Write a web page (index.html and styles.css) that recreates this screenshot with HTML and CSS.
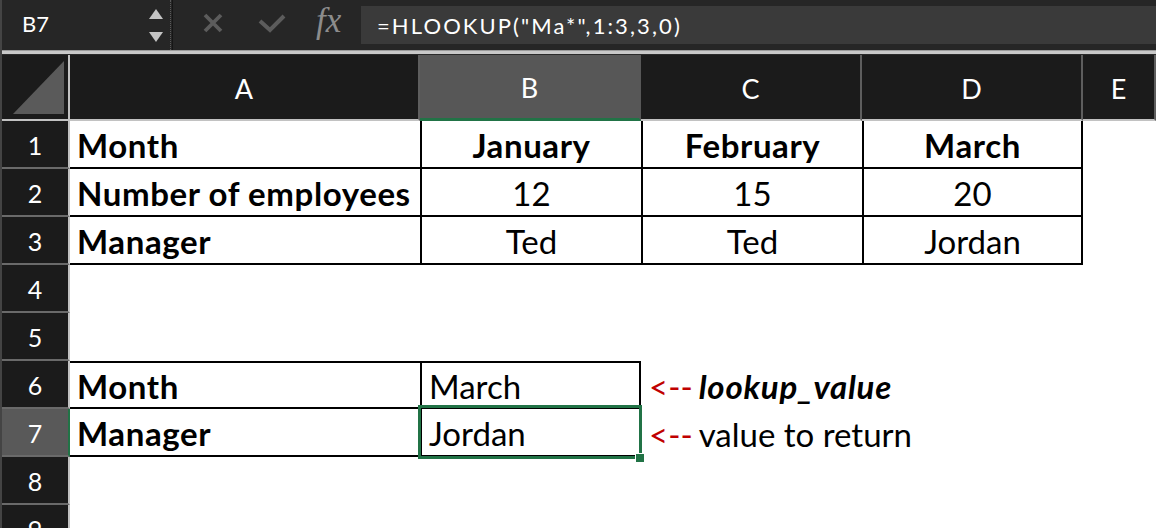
FILE: index.html
```html
<!DOCTYPE html>
<html>
<head>
<link rel="stylesheet" href="styles.css">
</head>
<body>
<div class="app">
    <div class="formula-bar">
        <div class="name-box">
            <span class="cell-ref">B7</span>
            <svg class="spinner" width="16" height="36" viewBox="0 0 16 36">
                <polygon points="1,11 15,11 8,1" fill="#c4c4c4"/>
                <polygon points="1,24 15,24 8,34" fill="#c4c4c4"/>
            </svg>
        </div>
        <div class="bar-divider"></div>
        <svg class="icon-cancel" width="20" height="20" viewBox="0 0 20 20">
            <path d="M2 2 L18 18 M18 2 L2 18" stroke="#5c5c5c" stroke-width="3.8" fill="none"/>
        </svg>
        <svg class="icon-enter" width="28" height="20" viewBox="0 0 28 20">
            <path d="M2 8 L12 17 L26 3" stroke="#5c5c5c" stroke-width="4" fill="none"/>
        </svg>
        <span class="fx">fx</span>
        <div class="formula-input">=HLOOKUP("Ma*",1:3,3,0)</div>
    </div>
    <div class="bar-rule"></div>

    <div class="sheet">
        <div class="corner">
            <svg width="52" height="54" viewBox="0 0 52 54"><polygon points="0,53 51,53 51,0" fill="#5a5a5a"/></svg>
        </div>
        <div class="col-head">A</div>
        <div class="col-head active">B</div>
        <div class="col-head">C</div>
        <div class="col-head">D</div>
        <div class="col-head">E</div>

        <div class="row-head">1</div>
        <div class="cell bold bb">Month</div>
        <div class="cell bold center bl bb">January</div>
        <div class="cell bold center bl bb">February</div>
        <div class="cell bold center bl bb br">March</div>
        <div class="cell"></div>

        <div class="row-head">2</div>
        <div class="cell bold bb">Number of employees</div>
        <div class="cell center bl bb">12</div>
        <div class="cell center bl bb">15</div>
        <div class="cell center bl bb br">20</div>
        <div class="cell"></div>

        <div class="row-head">3</div>
        <div class="cell bold bb">Manager</div>
        <div class="cell center bl bb">Ted</div>
        <div class="cell center bl bb">Ted</div>
        <div class="cell center bl bb br">Jordan</div>
        <div class="cell"></div>

        <div class="row-head">4</div>
        <div class="cell"></div><div class="cell"></div><div class="cell"></div><div class="cell"></div><div class="cell"></div>

        <div class="row-head">5</div>
        <div class="cell"></div><div class="cell"></div><div class="cell"></div><div class="cell"></div><div class="cell"></div>

        <div class="row-head">6</div>
        <div class="cell bold bt bb">Month</div>
        <div class="cell bl bt bb br">March</div>
        <div class="cell note"><span class="arrow">&lt;--</span> <b class="term">lookup_value</b></div>
        <div class="cell"></div><div class="cell"></div>

        <div class="row-head selected">7</div>
        <div class="cell bold bb">Manager</div>
        <div class="cell bl bb br current">Jordan
            <div class="selection"><span class="fill-handle"></span></div>
        </div>
        <div class="cell note"><span class="arrow">&lt;--</span> value to return</div>
        <div class="cell"></div><div class="cell"></div>

        <div class="row-head">8</div>
        <div class="cell"></div><div class="cell"></div><div class="cell"></div><div class="cell"></div><div class="cell"></div>

        <div class="row-head">9</div>
        <div class="cell"></div><div class="cell"></div><div class="cell"></div><div class="cell"></div><div class="cell"></div>
    </div>
</div>
</body>
</html>
```

FILE: styles.css
```css
* {
    margin: 0;
    padding: 0;
    box-sizing: border-box;
}

body {
    background: #ffffff;
    font-family: "Lato", "Open Sans", sans-serif;
}

.app {
    width: 1156px;
    height: 528px;
    overflow: hidden;
    border-left: 2px solid #444444;
}

/* formula bar */
.formula-bar {
    height: 50px;
    background: #262626;
    display: flex;
    align-items: center;
}

.name-box {
    width: 168px;
    height: 50px;
    display: flex;
    align-items: center;
    justify-content: space-between;
    padding: 0 6px 0 20px;
}

.cell-ref {
    color: #ffffff;
    font-size: 22px;
    margin-top: -4px;
}

.spinner {
    margin-top: 1px;
}

.bar-divider {
    width: 3px;
    height: 50px;
    border-left: 1px dotted #5a5a5a;
    border-right: 1px solid #161616;
}

.icon-cancel {
    margin-left: 30px;
    margin-top: -4px;
}

.icon-enter {
    margin-left: 35px;
    margin-top: -4px;
}

.fx {
    font-family: "Liberation Serif", serif;
    font-style: italic;
    font-size: 35px;
    color: #8c8c8c;
    margin-left: 30px;
    margin-top: -8px;
    width: 32px;
}

.formula-input {
    flex: 1;
    height: 38px;
    margin-left: 13px;
    margin-top: 0;
    background: #3a3a3a;
    color: #ffffff;
    font-size: 22px;
    letter-spacing: 2.1px;
    padding-left: 16px;
    display: flex;
    align-items: center;
}

.bar-rule {
    height: 5px;
    background: #c8c8c8;
    border-top: 1px solid #9a9a9a;
    border-bottom: 1px solid #2a2a2a;
}

/* grid */
.sheet {
    display: grid;
    grid-template-columns: 68px 350px 221px 221px 221px 1fr;
    grid-template-rows: 66px repeat(9, 48px);
}

.corner {
    background: #1b1b1b;
    border-right: 2px solid #c2c2c2;
    border-bottom: 2px solid #c2c2c2;
    display: flex;
    align-items: flex-end;
    padding: 0 0 4px 11px;
}

.col-head {
    background: #1b1b1b;
    color: #ffffff;
    font-size: 27px;
    display: flex;
    align-items: center;
    justify-content: center;
    border-bottom: 2px solid #c2c2c2;
    border-right: 2px solid #5e5e5e;
    padding-top: 2px;
}

.col-head.active {
    background: #575757;
    border-bottom: 3px solid #217346;
    border-right-color: #575757;
}

.row-head {
    background: #1b1b1b;
    color: #ffffff;
    font-size: 25px;
    display: flex;
    align-items: center;
    justify-content: center;
    border-right: 2px solid #c2c2c2;
    border-bottom: 2px solid #6a6a6a;
    padding-top: 2px;
}

.row-head.selected {
    background: #595959;
    border-right-color: #217346;
}

.cell {
    position: relative;
    display: flex;
    align-items: center;
    padding: 2px 7px 0 7px;
    font-size: 33px;
    color: #000000;
    white-space: nowrap;
}

.bold {
    font-weight: bold;
    letter-spacing: 0.6px;
}

.center {
    justify-content: center;
}

.bl { border-left: 2px solid #000; }
.br { border-right: 2px solid #000; }
.bt { border-top: 2px solid #000; }
.bb { border-bottom: 2px solid #000; }

.note {
    padding-left: 8px;
    overflow: visible;
}

.term {
    font-style: italic;
    letter-spacing: 0.8px;
}

.arrow {
    color: #c00000;
    margin-right: 6px;
}

.selection {
    position: absolute;
    left: -4px;
    top: -4px;
    right: -3px;
    bottom: -4px;
    border: 3px solid #217346;
}

.fill-handle {
    position: absolute;
    right: -6px;
    bottom: -7px;
    width: 10px;
    height: 10px;
    background: #217346;
    border: 1px solid #ffffff;
}
```
